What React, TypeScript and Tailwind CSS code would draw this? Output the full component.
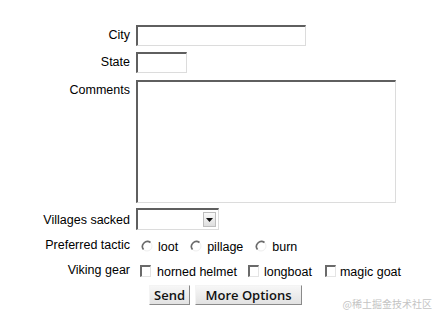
import React from 'react';

const field =
  'border-t-2 border-l-2 border-r border-b border-t-[#5f5f5f] border-l-[#5f5f5f] border-r-[#dcdcdc] border-b-[#dcdcdc] bg-white';

const Radio = () => (
  <svg width="12" height="12" viewBox="0 0 12 12" className="shrink-0">
    <circle cx="6" cy="6" r="5" fill="white" stroke="#eeeeee" strokeWidth="1" />
    <path d="M9.5 2.5 A5 5 0 0 0 2.5 9.5" fill="none" stroke="#6a6a6a" strokeWidth="1.6" />
  </svg>
);

const Check = () => (
  <span className="block h-[12px] w-[11px] shrink-0 border-t-2 border-l-2 border-r border-b border-t-[#6a6a6a] border-l-[#6a6a6a] border-r-[#e4e4e4] border-b-[#e4e4e4] bg-white" />
);

const Row: React.FC<{ label: string; className?: string; labelClass?: string; children: React.ReactNode }> = ({
  label,
  className = '',
  labelClass = 'pt-[3px]',
  children,
}) => (
  <div className={`flex gap-[6px] ${className}`}>
    <div className={`w-[130px] shrink-0 text-right ${labelClass}`}>{label}</div>
    <div className="flex items-center">{children}</div>
  </div>
);

export default function App() {
  return (
    <div className="relative h-[318px] w-[439px] bg-white pt-[25px] font-['Liberation_Sans',Arial,sans-serif] text-[12.5px] leading-[14px] text-black">
      <Row label="City">
        <div className={`h-[21px] w-[170px] ${field}`} />
      </Row>
      <Row label="State" className="mt-[6px]">
        <div className={`h-[21px] w-[51px] ${field}`} />
      </Row>
      <Row label="Comments" className="mt-[7px]">
        <div className={`h-[123px] w-[260px] ${field}`} />
      </Row>
      <Row label="Villages sacked" className="mt-[5px]" labelClass="pt-[5px]">
        <div className={`flex h-[22px] w-[83px] items-center justify-end pr-[2px] ${field}`}>
          <div className="flex h-[15px] w-[13px] items-center justify-center border border-[#bdbdbd] bg-gradient-to-b from-[#fafafa] to-[#dedede]">
            <svg width="7" height="4" viewBox="0 0 7 4">
              <path d="M0 0 H7 L3.5 4 Z" fill="#111" />
            </svg>
          </div>
        </div>
      </Row>
      <Row label="Preferred tactic" className="mt-[7px]" labelClass="pt-[1px]">
        <div className="flex items-center pl-[5px]">
          <div className="flex items-center gap-[5px]">
            <Radio />
            <span className="pt-[3px]">loot</span>
          </div>
          <div className="ml-[12px] flex items-center gap-[5px]">
            <Radio />
            <span className="pt-[3px]">pillage</span>
          </div>
          <div className="ml-[12px] flex items-center gap-[5px]">
            <Radio />
            <span className="pt-[3px]">burn</span>
          </div>
        </div>
      </Row>
      <Row label="Viking gear" className="mt-[9px]" labelClass="pt-[0px]">
        <div className="flex items-center pl-[4px]">
          <div className="flex items-center gap-[6px]">
            <Check />
            <span className="pt-[2px]">horned helmet</span>
          </div>
          <div className="ml-[11px] flex items-center gap-[5px]">
            <Check />
            <span className="pt-[2px]">longboat</span>
          </div>
          <div className="ml-[13px] flex items-center gap-[4px]">
            <Check />
            <span className="pt-[2px]">magic goat</span>
          </div>
        </div>
      </Row>
      <div className="mt-[6px] flex gap-[5px] pl-[149px] font-['Open_Sans','DejaVu_Sans',sans-serif] text-[13px] font-semibold leading-[16px] text-[#111]">
        <button className="h-[20px] w-[41px] border border-t-[#f4f4f4] border-l-[#f4f4f4] border-r-[#8a8a8a] border-b-[#8a8a8a] bg-gradient-to-b from-[#f7f7f7] to-[#e2e2e2]">
          Send
        </button>
        <button className="h-[20px] w-[107px] border border-t-[#f4f4f4] border-l-[#f4f4f4] border-r-[#8a8a8a] border-b-[#8a8a8a] bg-gradient-to-b from-[#f7f7f7] to-[#e2e2e2]">
          More Options
        </button>
      </div>
      <div className="absolute bottom-[8px] right-[7px] font-['Noto_Sans_CJK_SC',sans-serif] text-[10px] leading-[12px] text-[#c4c4c4]">
        @稀土掘金技术社区
      </div>
    </div>
  );
}
